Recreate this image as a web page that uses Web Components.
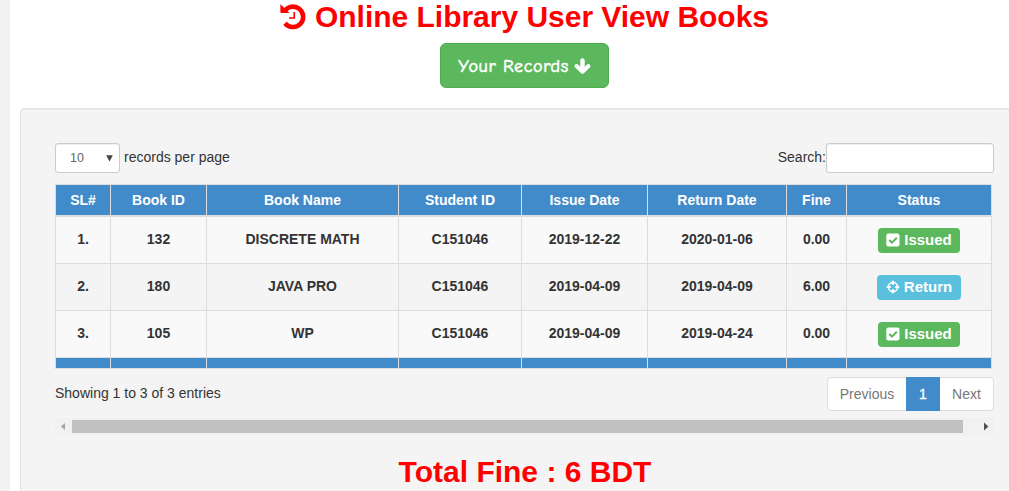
<!DOCTYPE html>
<html lang="en"><head><meta charset="utf-8"><title>Online Library</title>
<style>
html,body{margin:0;height:100%;overflow:hidden}
body{font:14px/20px "Liberation Sans",Arial,sans-serif;color:#333;background:#fff}
</style></head><body>
<library-page></library-page>
<script>
const define=(name,html)=>customElements.define(name,class extends HTMLElement{
  constructor(){super();this.attachShadow({mode:'open'}).innerHTML=typeof html==='function'?html(this):html;}
});
const icons={
 history:'<svg width="27" height="26" viewBox="0 0 27 26"><path d="M4.6 7.2A10.2 10.2 0 1 1 5 19.4" fill="none" stroke="currentColor" stroke-width="4.6" transform="translate(0 -.2)"/><path d="M.5.3 9.6 9H1.5Q.4 9 .4 8V1Z" fill="currentColor"/><path d="M14.3 8V14H9" fill="none" stroke="currentColor" stroke-width="1.6"/></svg>',
 down:'<svg width="17" height="17" viewBox="0 0 17 17" fill="none" stroke="currentColor"><path d="M8.5 2.4V12" stroke-width="4.4" stroke-linecap="round"/><path d="M2.6 8 8.5 13.7 14.4 8" stroke-width="4" stroke-linecap="round" stroke-linejoin="round"/></svg>',
 check:'<svg width="14" height="14" viewBox="0 0 14 14"><rect x=".3" y=".5" width="13.2" height="13" rx="2.2" fill="#fff"/><path d="M3.2 7.1 5.9 9.6 10.8 4.8" fill="none" stroke="#5cb85c" stroke-width="2"/></svg>',
 move:'<svg width="14" height="14" viewBox="0 0 14 14"><path d="M7 .2 9.6 3.1H8.1V4.8H5.9V3.1H4.4ZM7 13.8 4.4 10.9H5.9V9.2H8.1V10.9H9.6ZM.2 7 3.1 4.4V5.9H4.8V8.1H3.1V9.6ZM13.8 7 10.9 9.6V8.1H9.2V5.9H10.9V4.4Z" fill="#fff"/><circle cx="7" cy="7" r="4.6" fill="none" stroke="#fff" stroke-width="1.5"/></svg>'
};
define('page-title',`<style>:host{display:flex;justify-content:center;align-items:flex-start;height:43px;color:red;font-size:30px;font-weight:700;line-height:33px;letter-spacing:-.02px;white-space:nowrap;box-sizing:border-box}svg{display:block;margin:4px 8px 0 0}</style>${icons.history}<span><slot></slot></span>`);
define('records-button',`<style>:host{display:flex;justify-content:center}button{box-sizing:border-box;display:flex;align-items:center;justify-content:center;gap:5px;width:169px;height:45px;padding:1px 0 0;border:1px solid #4cae4c;border-radius:6px;background:#5cb85c;color:#fff;font:18px/24px "Comic Sans MS","Comic Neue",Lato,sans-serif;white-space:nowrap}span{letter-spacing:.65px;-webkit-text-stroke:.6px #fff;padding-top:1px}svg{display:block}</style><button><span><slot></slot></span>${icons.down}</button>`);
define('table-tools',`<style>:host{display:flex;justify-content:space-between;width:939px;height:30px;line-height:29px}.side{display:flex}.select,.search{box-sizing:border-box;height:30px;background:#fff;border:1px solid #ccc;border-radius:3px;box-shadow:inset 0 1px 1px rgba(0,0,0,.075)}.select{display:flex;justify-content:space-between;align-items:center;width:65px;padding:0 6px 0 14px;margin-right:4px;color:#666;font-size:12.5px}.search{width:168px}</style><div class="side"><div class="select"><span>10</span><svg width="7" height="7" viewBox="0 0 7 7"><path d="M.2.2h6.6L3.5 6.5z" fill="#444"/></svg></div><span>records per page</span></div><div class="side"><span>Search:</span><div class="search"></div></div>`);
define('status-label',el=>{const ret=el.hasAttribute('returned');return `<style>:host{display:flex;box-sizing:border-box;align-items:center;justify-content:center;gap:4px;width:${ret?84:82}px;height:25px;padding-bottom:2px;border-radius:4px;background:${ret?'#5bc0de':'#5cb85c'};color:#fff;font-size:15px;line-height:23px}svg{display:block;flex:none}</style>${ret?icons.move:icons.check}<span>${ret?'Return':'Issued'}</span>`});
const heads=['SL#','Book ID','Book Name','Student ID','Issue Date','Return Date','Fine','Status'];
const rows=[['1.','132','DISCRETE MATH','C151046','2019-12-22','2020-01-06','0.00',''],['2.','180','JAVA PRO','C151046','2019-04-09','2019-04-09','6.00','returned'],['3.','105','WP','C151046','2019-04-09','2019-04-24','0.00','']];
customElements.define('book-table',class extends HTMLElement{constructor(){super();const cell=(c,t)=>`<div class="${c}">${t}</div>`;this.attachShadow({mode:'open'}).innerHTML=`<style>:host{display:grid;box-sizing:border-box;width:937px;grid-template-columns:54px 95px 191px 122px 125px 138px 59px 144px;grid-template-rows:31px 46px 46px 46px 10px;gap:1px;border:1px solid #ddd;background:#ddd;font-weight:700}div{display:flex;align-items:center;justify-content:center;white-space:nowrap}.head{background:#428bca;color:#fff;border-bottom:1px solid #ddd}.odd{background:#f9f9f9}.even{background:#f4f4f4}.foot{background:#428bca}.odd,.even{box-sizing:border-box;padding-bottom:2px}.badge{padding:1px 0 0}</style>`+heads.map(h=>cell('head',h)).join('')+rows.map((r,i)=>r.map((t,j)=>cell((i%2?'even':'odd')+(j===7?' badge':''),j===7?`<status-label ${t}></status-label>`:t)).join('')).join('')+heads.map(()=>cell('foot','')).join('')}});
define('table-summary',`<style>:host{display:flex;justify-content:space-between;width:939px;height:34px;margin-top:8px}.info{line-height:33px}.pages{display:grid;box-sizing:border-box;grid-template-columns:78px 34px 53px;width:167px;height:34px;border:1px solid #ddd;border-radius:4px;background:#fff;color:#777;text-align:center;line-height:32px}.active{margin:-1px 0;background:#428bca;color:#fff;line-height:34px;-webkit-text-stroke:.3px #fff}</style><span class="info">Showing 1 to 3 of 3 entries</span><div class="pages"><span>Previous</span><span class="active">1</span><span>Next</span></div>`);
define('scroll-bar',`<style>:host{display:flex;align-items:center;width:939px;height:17px;margin-top:7px;background:#f1f1f1}svg{display:block;width:17px;height:17px}.thumb{width:891px;height:13px;background:#c1c1c1}.space{flex:1}</style><svg viewBox="0 0 17 17"><path d="M10 5v7L6 8.5z" fill="#a3a3a3"/></svg><div class="thumb"></div><div class="space"></div><svg viewBox="0 0 17 17"><path d="M7 4.5v8l4.4-4z" fill="#505050"/></svg>`);
define('total-fine',`<style>:host{display:block;width:940px;margin-top:20px;text-align:center;color:red;font-size:30px;font-weight:700;line-height:33px}</style><slot></slot>`);
define('records-panel',`<style>:host{display:block;box-sizing:border-box;width:1009px;height:420px;margin:20px 0 0 10px;padding:34px;border:1px solid #e3e3e3;border-radius:4px;background:#f4f4f4;box-shadow:inset 0 1px 1px rgba(0,0,0,.05)}book-table{margin-top:11px}</style><table-tools></table-tools><book-table></book-table><table-summary></table-summary><scroll-bar></scroll-bar><total-fine>Total Fine : 6 BDT</total-fine>`);
define('library-page',`<style>:host{display:block;box-sizing:border-box;width:1009px;height:491px;overflow:hidden;border-left:10px solid #f2f2f2;background:#fff}.top{width:1029px}</style><div class="top"><page-title>Online Library User View Books</page-title><records-button>Your Records</records-button></div><records-panel></records-panel>`);
</script></body></html>
